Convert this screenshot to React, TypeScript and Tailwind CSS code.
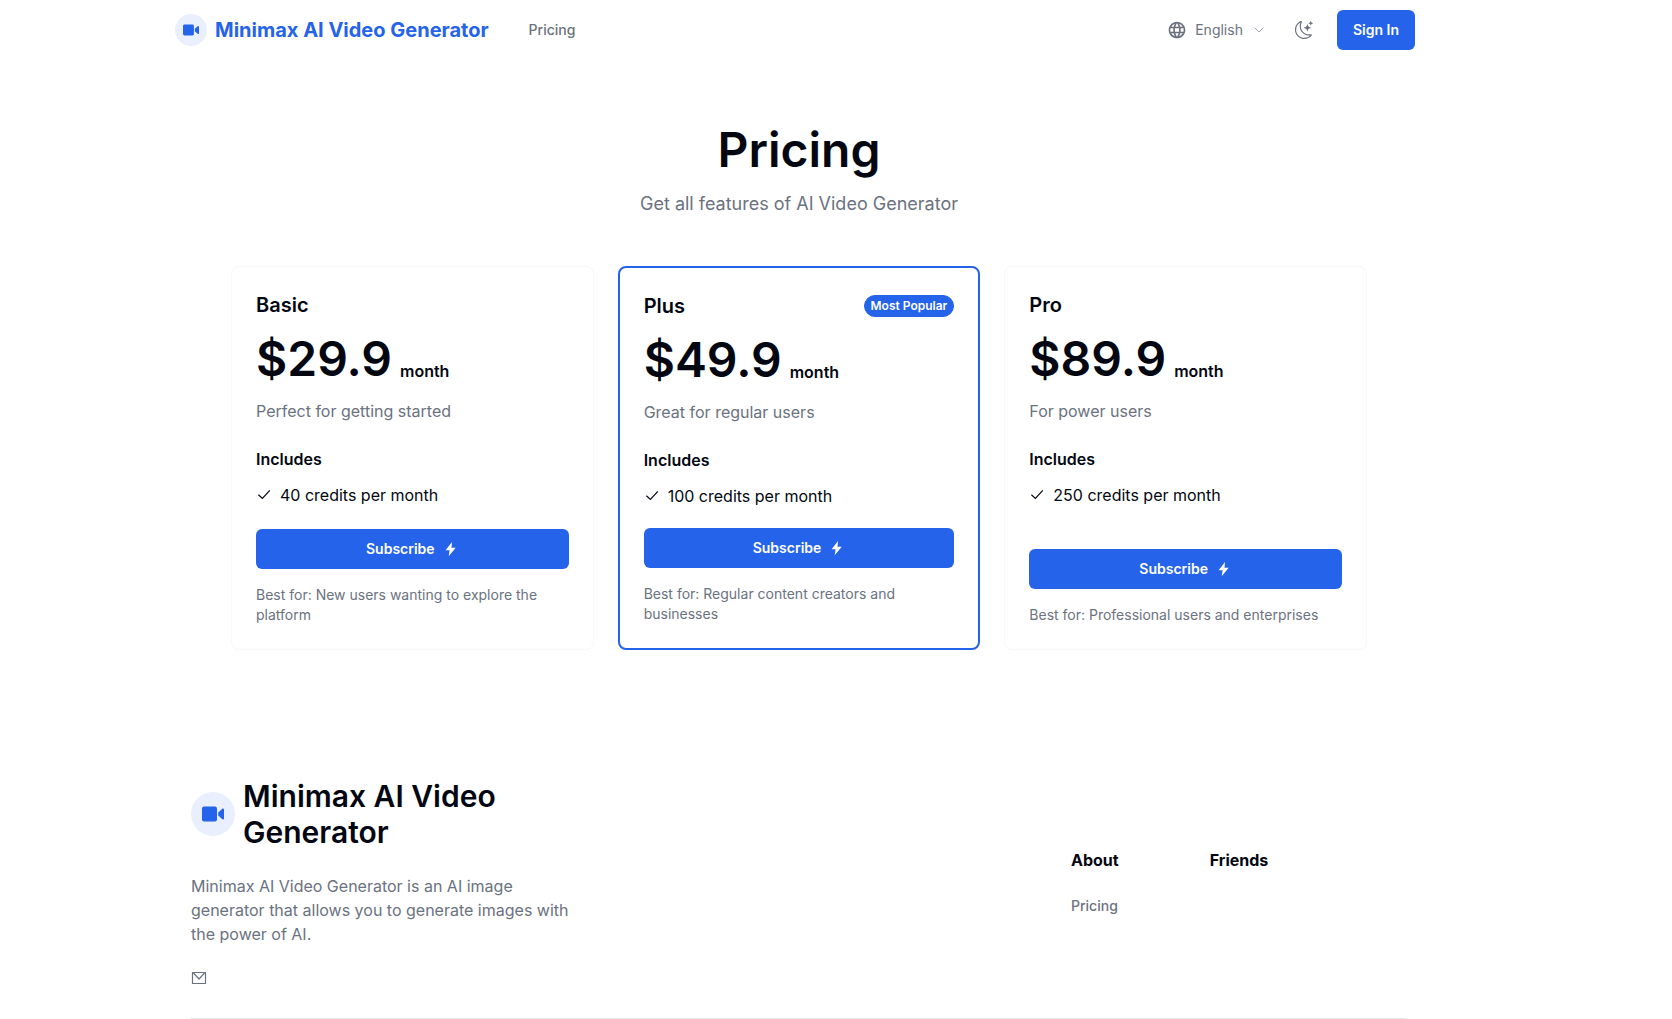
import React from 'react';
import { ChevronDown } from 'lucide-react';
import { BsMoonStars } from 'react-icons/bs';
import { MdLanguage } from 'react-icons/md';

interface Plan {
  name: string;
  price: string;
  description: string;
  feature: string;
  bestFor: string;
  popular?: boolean;
}

const plans: Plan[] = [
  {
    name: 'Basic',
    price: '$29.9',
    description: 'Perfect for getting started',
    feature: '40 credits per month',
    bestFor: 'Best for: New users wanting to explore the platform',
  },
  {
    name: 'Plus',
    price: '$49.9',
    description: 'Great for regular users',
    feature: '100 credits per month',
    bestFor: 'Best for: Regular content creators and businesses',
    popular: true,
  },
  {
    name: 'Pro',
    price: '$89.9',
    description: 'For power users',
    feature: '250 credits per month',
    bestFor: 'Best for: Professional users and enterprises',
  },
];

const VideoIcon = ({ className }: { className?: string }) => (
  <svg viewBox="0 0 22 16" fill="currentColor" className={className} aria-hidden="true">
    <rect x="0" y="0.5" width="15" height="15" rx="2" />
    <path d="M16.2 6.4 20.6 2.6c.6-.5 1.4-.1 1.4.6v9.6c0 .7-.8 1.1-1.4.6l-4.400-3.800Z" />
  </svg>
);

const BoltIcon = () => (
  <svg viewBox="0 0 16 16" fill="currentColor" className="h-4 w-4" aria-hidden="true">
    <path d="M9 1 2.600 9.200h4L5.700 15.200l7-8.400H8.500Z" />
  </svg>
);

const CheckIcon = () => (
  <svg
    viewBox="0 0 16 16"
    fill="none"
    stroke="currentColor"
    strokeWidth="1.2"
    className="h-4 w-4 shrink-0"
    aria-hidden="true"
  >
    <path d="m2.400 7.800 4 3.600L13.800 3.400" />
  </svg>
);

const MailIcon = () => (
  <svg viewBox="0 0 16 16" fill="none" stroke="currentColor" className="h-4 w-4" aria-hidden="true">
    <path strokeWidth="1.2" d="M1.500 2.500h13v11h-13Z M2.500 3 8 9l5.500-6" />
  </svg>
);

const Header = () => (
  <header className="mx-auto flex max-w-7xl items-center justify-between py-2.5 pl-4 pr-6">
    <div className="flex items-center gap-10">
      <a href="#" className="flex items-center gap-2 text-[#2563eb]">
        <span className="flex h-8 w-8 items-center justify-center rounded-full bg-[#e9effd]">
          <VideoIcon className="h-3 w-4" />
        </span>
        <span className="text-xl font-bold">Minimax AI Video Generator</span>
      </a>
      <nav className="flex">
        <a href="#pricing" className="text-sm font-medium text-[#6b7280]">
          Pricing
        </a>
      </nav>
    </div>

    <div className="flex items-center text-[#6b7280]">
      <button type="button" className="flex items-center gap-2 text-sm">
        <MdLanguage className="h-5 w-5" />
        English
        <ChevronDown className="h-4 w-4 text-[#9ca3af]" strokeWidth={1.5} />
      </button>
      <button type="button" aria-label="Toggle theme" className="mr-5 ml-6 p-1">
        <BsMoonStars className="h-[18px] w-[18px]" />
      </button>
      <button type="button" className="h-10 rounded-md bg-[#2563eb] px-4 text-sm font-semibold text-white">
        Sign In
      </button>
    </div>
  </header>
);

const PlanCard = ({ plan }: { plan: Plan }) => (
  <article
    className={`flex flex-col rounded-lg p-6 ${
      plan.popular ? 'border-2 border-[#2563eb]' : 'border border-[#f8f8f9]'
    }`}
  >
    <div className="flex items-center justify-between">
      <h2 className="text-xl font-semibold">{plan.name}</h2>
      {plan.popular && (
        <span className="rounded-full border border-[#2563eb] bg-[#2563eb] px-1.5 py-0.5 text-xs font-semibold text-white">
          Most Popular
        </span>
      )}
    </div>
    <p className="mt-4 flex items-end gap-2 font-semibold">
      <span className="text-5xl leading-none">{plan.price}</span>
      <span>month</span>
    </p>
    <p className="mt-4 text-[#6b7280]">{plan.description}</p>
    <h3 className="mt-6 font-semibold">Includes</h3>
    <ul className="mt-3 mb-5">
      <li className="flex items-center gap-2">
        <CheckIcon />
        {plan.feature}
      </li>
    </ul>
    <button
      type="button"
      className="mt-auto flex h-10 shrink-0 items-center justify-center gap-2 rounded-md bg-[#2563eb] text-sm font-semibold text-white"
    >
      Subscribe
      <BoltIcon />
    </button>
    <p className="mt-4 text-sm text-[#6b7280]">{plan.bestFor}</p>
  </article>
);

const Footer = () => (
  <footer className="mx-auto max-w-7xl px-8">
    <div className="flex items-center justify-between border-b border-[#e5e7eb] pb-8">
      <div className="w-96">
        <div className="flex items-center gap-2">
          <span className="flex h-11 w-11 shrink-0 items-center justify-center rounded-full bg-[#e9effd] text-[#2563eb]">
            <VideoIcon className="h-4 w-[22px]" />
          </span>
          <span className="text-3xl font-semibold">Minimax AI Video Generator</span>
        </div>
        <p className="mt-6 text-[#6b7280]">
          Minimax AI Video Generator is an AI image generator that allows you to generate images with the
          power of AI.
        </p>
        <a href="#contact" aria-label="Email" className="mt-6 block w-fit text-[#6b7280]">
          <MailIcon />
        </a>
      </div>
      <div className="flex w-84 gap-[91px]">
        <div>
          <h3 className="font-bold">About</h3>
          <a href="#pricing" className="mt-6 block text-sm font-medium text-[#6b7280]">
            Pricing
          </a>
        </div>
        <h3 className="font-bold">Friends</h3>
      </div>
    </div>
  </footer>
);

const App = () => {
  return (
    <div className="min-h-screen bg-white pr-[74px] font-['Inter',sans-serif] text-[#030711]">
      <Header />
      <main id="pricing" className="mx-auto max-w-[1200px] px-8 pt-16 pb-32">
        <div className="text-center">
          <h1 className="text-5xl leading-[52px] font-semibold">Pricing</h1>
          <p className="mt-3.5 text-lg text-[#6b7280]">Get all features of AI Video Generator</p>
        </div>
        <div className="mt-12 grid grid-cols-3 gap-6">
          {plans.map((plan) => (
            <PlanCard key={plan.name} plan={plan} />
          ))}
        </div>
      </main>
      <Footer />
    </div>
  );
};

export default App;
